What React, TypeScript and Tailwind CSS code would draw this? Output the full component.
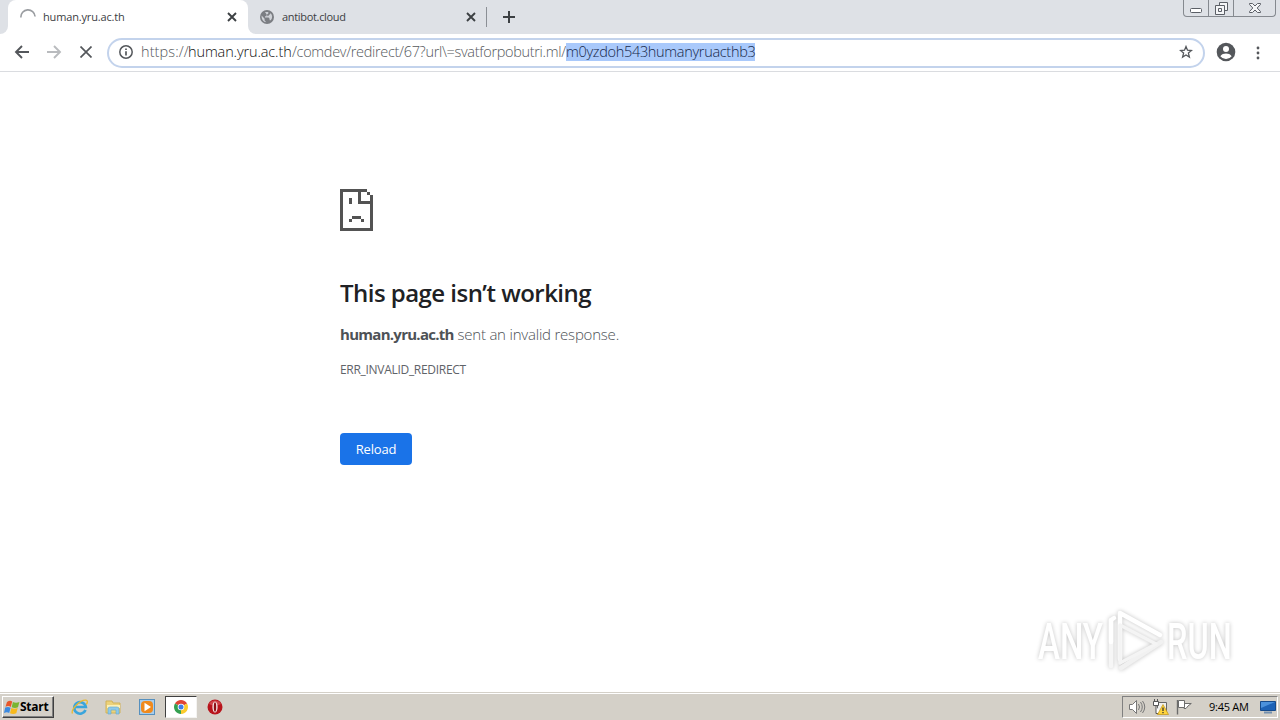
import type { ReactNode } from "react";

function Tab({ title, active, icon }: { title: string; active?: boolean; icon: ReactNode }) {
  return (
    <div
      className={
        active
          ? "w-60 h-[34px] bg-white rounded-t-lg flex items-center pl-3 pr-[11px] text-[#3c4043]"
          : "w-[231px] h-[34px] flex items-center pl-1 pr-[11px] text-[#3c4043]"
      }
    >
      {icon}
      <span className={active ? "ml-[7px] flex-1 text-[11px] tracking-[-0.16px]" : "ml-2 flex-1 text-[11px] tracking-[-0.32px]"}>
        {title}
      </span>
      <svg width="10" height="10" viewBox="0 0 10 10" stroke="#3c4043" strokeWidth="1.9">
        <path d="M1 1l8 8M9 1L1 9" />
      </svg>
    </div>
  );
}

function Spinner() {
  return (
    <svg width="16" height="16" viewBox="0 0 16 16" fill="none" stroke="#9a9da1" strokeWidth="1.6">
      <path d="M0.9 8.5A7.1 7.1 0 0 1 15.1 7.5" />
    </svg>
  );
}

function Globe() {
  return (
    <svg width="14" height="14" viewBox="0 0 14 14">
      <circle cx="7" cy="7" r="7" fill="#7b7e83" />
      <path
        d="M1.6 5.5l3 3.2v1.8l1.7 1.8C3.5 12 1.3 9.6 1.6 5.5zM5 1.9h3.3v1.5L6.5 5v1.2H5v1.3h3.6l1 1.3v1.4h1.2c2-2.2 1.7-5-.2-6.9L9.2 5 7.8 6.2"
        fill="#dee1e6"
        fillOpacity="0.85"
      />
    </svg>
  );
}

function WindowButtons() {
  return (
    <div className="h-[17px] w-[93px] flex border border-t-0 border-[#85898f] rounded-b-[4px]">
      <div className="w-[25px] border-r border-[#85898f] flex justify-center pt-2">
        <svg width="12" height="5" viewBox="0 0 12 5">
          <rect x="0.5" y="0.5" width="11" height="4" rx="1" fill="#fff" stroke="#5b5f66" />
        </svg>
      </div>
      <div className="w-[25px] border-r border-[#85898f] flex justify-center pt-[2px]">
        <svg width="13" height="13" viewBox="0 0 13 13" fill="#f4f5f7" stroke="#5b5f66">
          <path d="M4.5 0.5h8v8h-8z" />
          <path d="M0.5 3.5h9v9h-9z" />
          <path d="M3.5 6.5h3v3h-3z" />
        </svg>
      </div>
      <div className="flex-1 flex justify-center pt-[3px]">
        <svg width="12" height="10" viewBox="0 0 12 10">
          <path d="M.5.5h3L6 3 8.5.5h3v1L8.2 5l3.3 3.5v1h-3L6 7 3.5 9.5h-3v-1L3.8 5 .5 1.5z" fill="#f4f5f7" stroke="#5b5f66" />
        </svg>
      </div>
    </div>
  );
}

function Toolbar() {
  return (
    <div className="h-[38px] shrink-0 bg-white border-b border-[#dadce0] flex items-center">
      <svg width="16" height="14" viewBox="0 0 16 14" fill="none" stroke="#54575b" strokeWidth="1.9" className="ml-[14px] -mt-px">
        <path d="M15 7H2M8 1L2 7l6 6" />
      </svg>
      <svg width="16" height="14" viewBox="0 0 16 14" fill="none" stroke="#b9bbbe" strokeWidth="1.9" className="ml-4 -mt-px">
        <path d="M1 7h13M8 1l6 6-6 6" />
      </svg>
      <svg width="12" height="12" viewBox="0 0 12 12" stroke="#54575b" strokeWidth="1.7" className="ml-[18px] -mt-px">
        <path d="M.5.5l11 11M11.5.5l-11 11" />
      </svg>

      {/* Address bar */}
      <div className="ml-[15px] w-[1098px] h-[30px] rounded-full border-2 border-[#c3d3ec] flex items-center pl-[10px] pr-[10px]">
        <svg width="14" height="14" viewBox="0 0 14 14" fill="none" stroke="#54575b" strokeWidth="1.5" className="-mt-px">
          <circle cx="7" cy="7" r="6.2" />
          <path d="M7 6.2v4.3M7 3.4v1.5" strokeWidth="1.7" />
        </svg>
        <div className="ml-2 -mt-px flex flex-1 items-center whitespace-pre font-light text-[14.5px] leading-[18px] text-[#55585c]">
          <span className="w-[47px] tracking-[0.1px]">https://</span>
          <span className="w-[104px] tracking-[-0.12px] text-[#111]">human.yru.ac.th</span>
          <span className="w-[274px] tracking-[-0.32px]">/comdev/redirect/67?url\=svatforpobutri.ml/</span>
          <span className="w-[189px] h-[18px] tracking-[-0.31px] leading-[17px] bg-[#a9c9fb] text-[#16284a]">m0yzdoh543humanyruacthb3</span>
        </div>
        <svg width="14" height="14" viewBox="1 1 14 14" fill="none" stroke="#54575b" strokeWidth="1.3" className="-mt-px">
          <path d="M8 2.5l1.5 3.7 4 .3-3.100 2.600 1 3.900L8 10.900 4.600 13l1-3.900-3.100-2.600 4-.3z" />
        </svg>
      </div>

      <svg width="20" height="20" viewBox="0 0 20 20" className="ml-[11px] -mt-px">
        <circle cx="10" cy="10" r="9.3" fill="#54575b" />
        <circle cx="10" cy="7" r="3" fill="#fff" />
        <path d="M4.3 14.3C5.5 12.2 8 11.5 10 11.5s4.5.7 5.7 2.8A7 7 0 0 1 10 17a7 7 0 0 1-5.7-2.7z" fill="#fff" />
      </svg>
      <svg width="4" height="14" viewBox="0 0 4 14" fill="#54575b" className="ml-[20px]">
        <circle cx="2" cy="2" r="1.4" />
        <circle cx="2" cy="7" r="1.4" />
        <circle cx="2" cy="12" r="1.4" />
      </svg>
    </div>
  );
}

function SadFile() {
  return (
    <svg width="33" height="42" viewBox="0 0 11 14" fill="#535353" shapeRendering="crispEdges">
      <path d="M0 0h9v1H7v3h3V2h1v12H0zM1 1v12h9V5H6V1z" fillRule="evenodd" />
      <path d="M9 1h1v1H9zM3 3h1v2H3zM4 9h3v1H4zM3 10h1v1H3zM7 10h1v1H7z" />
    </svg>
  );
}

function ErrorPage() {
  return (
    <main className="flex-1 pl-[340px] pt-[117px] flex flex-col items-start text-[#5f6368]">
      <SadFile />
      <h1 className="mt-[46px] text-[24px] leading-[32px] font-semibold tracking-[-0.53px] text-[#202124]">This page isn’t working</h1>
      <p className="mt-[14px] text-[15px] leading-[22px] font-light tracking-[-0.21px] text-[#4d5156]">
        <strong className="font-bold tracking-[-0.72px]">human.yru.ac.th</strong> sent an invalid response.
      </p>
      <p className="mt-4 text-[12px] leading-[18px] tracking-[-0.3px]">ERR_INVALID_REDIRECT</p>
      <button className="mt-[54px] w-[72px] h-8 pt-px rounded-[4px] bg-[#1a73e8] text-white text-[13px] tracking-[-0.15px]">Reload</button>
    </main>
  );
}

function Watermark() {
  return (
    <div className="absolute left-[1030px] top-[602px] w-[212px] h-[76px]">
      <svg width="212" height="76" viewBox="-8 -6 212 76" className="drop-shadow-[0_0_2px_rgba(0,0,0,0.24)]">
        <defs>
          <linearGradient id="fade" x1="0" y1="14" x2="0" y2="52" gradientUnits="userSpaceOnUse">
            <stop offset="0.5" stopColor="#fff" />
            <stop offset="0.52" stopColor="#eeeeee" />
            <stop offset="1" stopColor="#f3f3f3" />
          </linearGradient>
        </defs>
        <g fontFamily="Roboto, sans-serif" fontSize="50" fontWeight="500" fill="url(#fade)">
          <text transform="translate(0 51) scale(0.66 1)">ANY</text>
          <text transform="translate(129 51) scale(0.65 1)">RUN</text>
        </g>
        <g fill="none" strokeWidth="4.5" strokeLinejoin="round" strokeLinecap="round">
          <path d="M73 12v46" stroke="#f6f6f6" />
          <path d="M73 34v-22l3-2" stroke="#fff" />
          <path d="M83 60l40-26" stroke="#f1f1f1" />
          <path d="M82 51V5l40 22" stroke="#fff" />
          <path d="M82 17l36 19-36 19z" stroke="#f4f4f4" strokeWidth="3.5" />
        </g>
      </svg>
    </div>
  );
}

function Taskbar() {
  return (
    <footer className="h-[28px] shrink-0 bg-[#d4d0c8] border-t border-[#d4d0c8] shadow-[inset_0_1px_0_#fff] flex items-center text-[11px] text-black">
      <div className="mt-px ml-[2px] w-[52px] h-[22px] border border-t-white border-l-white border-r-[#404040] border-b-[#404040] shadow-[inset_-1px_-1px_0_#808080] flex items-center pl-px">
        <svg width="16" height="15" viewBox="0 0 16 15" className="shrink-0">
          <path d="M3 2Q6 0 8.2 1.5L6.8 7Q4.5 5.3 1.5 6.8z" fill="#e8572a" />
          <path d="M8.9 2q3 1.5 6.5 0L14 7.2q-3 1.5-6.3 0z" fill="#79b530" />
          <path d="M1.2 7.6Q4 6.2 6.6 7.7L5.2 13Q3 11.5 0 13z" fill="#3c8ae0" />
          <path d="M7.4 8q3 1.5 6.3 0L12.3 13.3q-3 1.5-6.3 0z" fill="#f7b91c" />
        </svg>
        <span className="font-bold text-[12px] tracking-[-0.25px]">Start</span>
      </div>

      {/* Quick launch */}
      <svg width="18" height="18" viewBox="0 0 18 18" fill="none" className="ml-[17px]">
        <path d="M14.5 12A5.8 5.8 0 1 1 14.8 9H4.5" stroke="#3aa5dc" strokeWidth="2.7" />
        <path d="M1.5 15.5C-.5 12 9 1.5 15 2.2c2 .4 1.5 2.6.3 4.3" stroke="#e9b931" strokeWidth="1.3" />
      </svg>
      <svg width="17" height="16" viewBox="0 0 17 16" className="ml-4">
        <path d="M1 2h6l1 2h7v10H1z" fill="#ecd27a" stroke="#d1b258" />
        <path d="M2 6h13v3H2z" fill="#fbf0b8" />
        <path d="M3 15v-5q0-2 2-2h7q2 0 2 2v5h-3v-4H6v4z" fill="#8ec9ea" stroke="#62a7cf" strokeWidth=".6" />
      </svg>
      <svg width="16" height="16" viewBox="0 0 16 16" className="ml-[17px]">
        <rect x=".5" y=".5" width="15" height="15" fill="#a8cdec" stroke="#5690be" />
        <rect x="2" y="2" width="12" height="12" rx="4" fill="#f08a1d" />
        <path d="M5.5 3.8L12 8l-6.500 4.200z" fill="#fff" />
      </svg>
      <div className="ml-[10px] mt-px w-[32px] h-[22px] bg-white border border-t-[#404040] border-l-[#404040] border-r-[#f4f3f1] border-b-[#f4f3f1] flex items-center justify-center">
        <svg width="14" height="14" viewBox="0 0 14 14">
          <path d="M7 7L.94 3.5A7 7 0 0 1 13.06 3.5z" fill="#e04434" />
          <path d="M7 7l6.06-3.5A7 7 0 0 1 7 14z" fill="#fbcb2c" />
          <path d="M7 7v7A7 7 0 0 1 .94 3.5z" fill="#34a050" />
          <circle cx="7" cy="7" r="3.3" fill="#fff" />
          <circle cx="7" cy="7" r="2.5" fill="#3f7de8" />
        </svg>
      </div>
      <svg width="16" height="16" viewBox="0 0 16 16" className="ml-[10px]">
        <circle cx="8" cy="8" r="7.5" fill="#b8141c" />
        <path d="M2 5a7 7 0 0 1 12 0q-6 3-12 0z" fill="#d0454a" />
        <ellipse cx="8" cy="8" rx="2.6" ry="5.6" fill="#f5e5e5" />
        <ellipse cx="8" cy="8" rx="1.2" ry="4.7" fill="#8e1015" />
      </svg>

      {/* System tray */}
      <div className="ml-auto mr-[2px] mt-px w-[156px] h-[22px] border border-t-[#808080] border-l-[#808080] border-r-white border-b-white flex items-center">
        <svg width="18" height="16" viewBox="0 0 18 16" fill="none" stroke="#777" className="ml-[5px]">
          <path d="M1.5 5.5h3l4-4v13l-4-4h-3z" fill="#fff" />
          <path d="M10.5 5q2 3 0 6M12.5 3q3.5 5 0 10M14.5 2q4.5 6 0 12" />
        </svg>
        <svg width="17" height="16" viewBox="0 0 17 16" className="ml-[6px]">
          <path d="M5.5 3.5h9v9h-9z" fill="#f0f0ed" stroke="#666" />
          <path d="M1.5 2.5h5v4h-5zM2.5 0v3M5.500 0v3M4 7v7.500h5" fill="#fff" stroke="#555" />
          <path d="M11 5.5l5.5 10h-11z" fill="#ffd43b" stroke="#c29413" strokeWidth=".7" />
          <path d="M11 8.5v3.5M11 13v1.3" stroke="#333" strokeWidth="1.3" />
        </svg>
        <svg width="16" height="16" viewBox="0 0 16 16" fill="#fff" stroke="#6c6c6c" className="ml-[7px]">
          <path d="M8 4.5h7.3L12 7l-2 2.5H8z" />
          <path d="M2.5 1.5h6v7h-6z" />
          <path d="M1.5 1v14.5" strokeWidth="1.4" />
        </svg>
        <span className="ml-[17px] w-[42px] whitespace-nowrap text-[11px] tracking-[-0.25px]">9:45 AM</span>
        <svg width="16" height="14" viewBox="0 0 16 14" className="ml-[9px]">
          <path d="M.5 1.5h15v9H.5z" fill="#1d62b6" stroke="#164a8b" />
          <path d="M1 2h14L1 8z" fill="#4b91dc" />
          <path d="M4 12.5h8" stroke="#7490ae" strokeWidth="2" />
        </svg>
      </div>
    </footer>
  );
}

export default function App() {
  return (
    <div className="relative w-[1280px] h-[720px] overflow-hidden bg-white flex flex-col font-['Open_Sans','Noto_Sans',sans-serif]">
      <header className="h-[34px] shrink-0 bg-[#dee1e6] flex items-start pr-1">
        <div className="w-2 h-[34px] bg-white">
          <div className="h-full bg-[#dee1e6] rounded-br-lg" />
        </div>
        <Tab title="human.yru.ac.th" active icon={<Spinner />} />
        <div className="w-2 h-[34px] bg-white">
          <div className="h-full bg-[#dee1e6] rounded-bl-lg" />
        </div>
        <Tab title="antibot.cloud" icon={<Globe />} />
        <div className="mt-[7px] w-px h-5 -ml-px bg-[#8b8f95]" />
        <svg width="12" height="12" viewBox="0 0 12 12" stroke="#3c4043" strokeWidth="2" className="ml-4 mt-[11px]">
          <path d="M6 0v12M0 6h12" />
        </svg>
        <div className="ml-auto">
          <WindowButtons />
        </div>
      </header>
      <Toolbar />
      <ErrorPage />
      <Taskbar />
      <Watermark />
    </div>
  );
}
